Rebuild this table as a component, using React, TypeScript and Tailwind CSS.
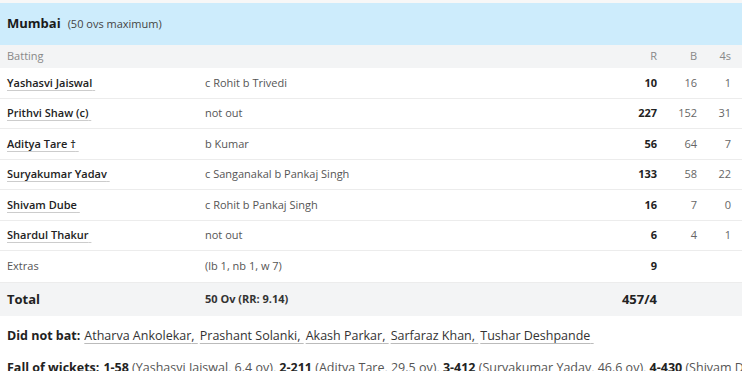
import React from 'react'

type Batter = {
    name: string
    dismissal: string
    r: string
    b: string
    fours: string
    sixes: string
    sr: string
}

const batters: Batter[] = [
    { name: 'Yashasvi Jaiswal', dismissal: 'c Rohit b Trivedi', r: '10', b: '16', fours: '1', sixes: '0', sr: '62.50' },
    { name: 'Prithvi Shaw (c)', dismissal: 'not out', r: '227', b: '152', fours: '31', sixes: '5', sr: '149.34' },
    { name: 'Aditya Tare †', dismissal: 'b Kumar', r: '56', b: '64', fours: '7', sixes: '1', sr: '87.50' },
    { name: 'Suryakumar Yadav', dismissal: 'c Sanganakal b Pankaj Singh', r: '133', b: '58', fours: '22', sixes: '3', sr: '229.31' },
    { name: 'Shivam Dube', dismissal: 'c Rohit b Pankaj Singh', r: '16', b: '7', fours: '0', sixes: '2', sr: '228.57' },
    { name: 'Shardul Thakur', dismissal: 'not out', r: '6', b: '4', fours: '1', sixes: '0', sr: '150.00' },
]

const dnb = ['Atharva Ankolekar', 'Prashant Solanki', 'Akash Parkar', 'Sarfaraz Khan', 'Tushar Deshpande']

const grid = 'grid grid-cols-[198px_412px_40px_40px_34px_40px_60px] items-center'

export default function App() {
    return (
        <div className="w-[742px] h-[371px] overflow-hidden bg-white font-['Open_Sans',sans-serif] text-[#222]">
            <div className="w-[900px] pt-[3px] bg-[#f7f7f7]">
                <div className="h-[42px] bg-[#cdecfc] flex items-center pl-[7px] gap-[7px]">
                    <span className="text-[13px] font-bold text-[#1a1a1a]">Mumbai</span>
                    <span className="text-[11px] text-[#444]">(50 ovs maximum)</span>
                </div>
            </div>

            <div className="w-[900px]">
                <div className={`${grid} h-[23px] bg-[#f3f4f5] text-[11px] text-[#888] pl-[7px]`}>
                    <span>Batting</span>
                    <span></span>
                    <span className="text-right">R</span>
                    <span className="text-right">B</span>
                    <span className="text-right">4s</span>
                    <span className="text-right">6s</span>
                    <span className="text-right">SR</span>
                </div>

                {batters.map((bat) => (
                    <div key={bat.name} className={`${grid} h-[30.5px] border-b border-[#ececec] text-[11px] pl-[7px]`}>
                        <span className="font-semibold text-[#222] underline decoration-[#ccc] underline-offset-[3px] whitespace-pre">{bat.name} </span>
                        <span className="text-[#555]">{bat.dismissal}</span>
                        <span className="text-right font-bold text-[#222]">{bat.r}</span>
                        <span className="text-right text-[#666]">{bat.b}</span>
                        <span className="text-right text-[#666]">{bat.fours}</span>
                        <span className="text-right text-[#666]">{bat.sixes}</span>
                        <span className="text-right text-[#666]">{bat.sr}</span>
                    </div>
                ))}

                <div className={`${grid} h-[32px] border-b border-[#ececec] text-[11px] pl-[7px]`}>
                    <span className="text-[#555]">Extras</span>
                    <span className="text-[#555]">(lb 1, nb 1, w 7)</span>
                    <span className="text-right font-bold text-[#222]">9</span>
                    <span></span>
                    <span></span>
                    <span></span>
                    <span></span>
                </div>

                <div className="grid grid-cols-[198px_412px_40px] items-center h-[33px] bg-[#f3f4f5] pl-[7px]">
                    <span className="text-[13px] font-bold text-[#222]">Total</span>
                    <span className="text-[11px] font-bold text-[#333]">50 Ov (RR: 9.14)</span>
                    <span className="text-right text-[13px] font-bold text-[#222]">457/4</span>
                </div>

                <div className="pl-[7px] h-[40px] flex items-center text-[12.5px] text-[#333] whitespace-nowrap">
                    <span className="font-bold text-[#222] mr-[4px]">Did not bat:</span>
                    {dnb.map((n, i) => (
                        <span key={n} className="underline decoration-[#bbb] underline-offset-[3px] whitespace-pre mr-[2px]">
                            {n}{i < dnb.length - 1 ? ', ' : ' '}
                        </span>
                    ))}
                </div>

                <div className="pl-[7px] h-[24px] flex items-center text-[12.5px] text-[#555] whitespace-nowrap">
                    <span className="font-bold text-[#222] mr-[4px]">Fall of wickets:</span>
                    <span className="font-bold text-[#222]">1-58</span>
                    <span>&nbsp;(Yashasvi Jaiswal, 6.4 ov),&nbsp;</span>
                    <span className="font-bold text-[#222]">2-211</span>
                    <span>&nbsp;(Aditya Tare, 29.5 ov),&nbsp;</span>
                    <span className="font-bold text-[#222]">3-412</span>
                    <span>&nbsp;(Suryakumar Yadav, 46.6 ov),&nbsp;</span>
                    <span className="font-bold text-[#222]">4-430</span>
                    <span>&nbsp;(Shivam Dube, 47.3 ov)</span>
                </div>
            </div>
        </div>
    )
}
